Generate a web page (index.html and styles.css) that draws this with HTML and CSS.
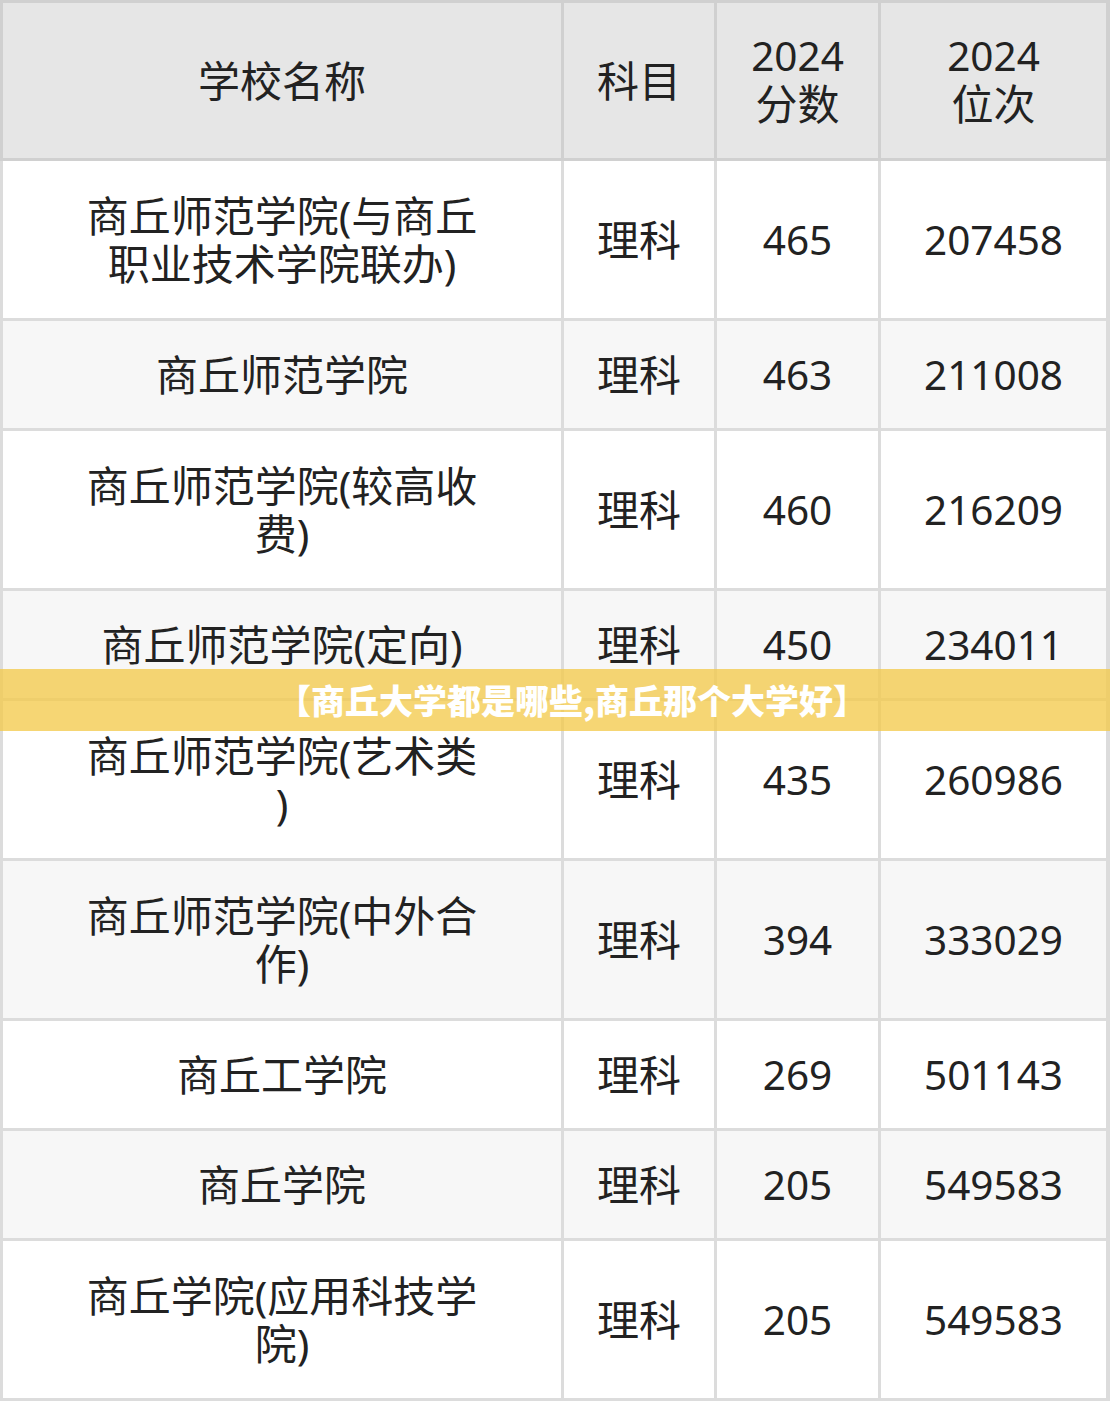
FILE: index.html
```html
<!DOCTYPE html>
<html lang="zh-CN">
<head>
<meta charset="utf-8">
<title>商丘大学都是哪些,商丘那个大学好</title>
<link rel="stylesheet" href="styles.css">
</head>
<body>
<div class="sheet">
  <div class="grid head">
    <div class="cell">学校名称</div>
    <div class="cell">科目</div>
    <div class="cell num"><div>2024<br><span class="cjk">分数</span></div></div>
    <div class="cell num"><div>2024<br><span class="cjk">位次</span></div></div>
  </div>
  <div class="grid body">
    <div class="cell tall">商丘师范学院(与商丘<br>职业技术学院联办)</div>
    <div class="cell tall">理科</div>
    <div class="cell tall num">465</div>
    <div class="cell tall num">207458</div>

    <div class="cell short alt">商丘师范学院</div>
    <div class="cell short alt">理科</div>
    <div class="cell short alt num">463</div>
    <div class="cell short alt num">211008</div>

    <div class="cell tall">商丘师范学院(较高收<br>费)</div>
    <div class="cell tall">理科</div>
    <div class="cell tall num">460</div>
    <div class="cell tall num">216209</div>

    <div class="cell short alt">商丘师范学院(定向)</div>
    <div class="cell short alt">理科</div>
    <div class="cell short alt num">450</div>
    <div class="cell short alt num">234011</div>

    <div class="cell tall">商丘师范学院(艺术类<br>)</div>
    <div class="cell tall">理科</div>
    <div class="cell tall num">435</div>
    <div class="cell tall num">260986</div>

    <div class="cell tall alt">商丘师范学院(中外合<br>作)</div>
    <div class="cell tall alt">理科</div>
    <div class="cell tall alt num">394</div>
    <div class="cell tall alt num">333029</div>

    <div class="cell short">商丘工学院</div>
    <div class="cell short">理科</div>
    <div class="cell short num">269</div>
    <div class="cell short num">501143</div>

    <div class="cell short alt">商丘学院</div>
    <div class="cell short alt">理科</div>
    <div class="cell short alt num">205</div>
    <div class="cell short alt num">549583</div>

    <div class="cell tall">商丘学院(应用科技学<br>院)</div>
    <div class="cell tall">理科</div>
    <div class="cell tall num">205</div>
    <div class="cell tall num">549583</div>
  </div>
  <div class="banner"><span class="banner-text">【商丘大学都是哪些,商丘那个大学好】</span></div>
</div>
</body>
</html>
```

FILE: styles.css
```css
html, body {
  margin: 0;
  padding: 0;
  background: #ffffff;
}

.sheet {
  position: relative;
  width: 1110px;
  font-family: "Noto Sans", "Noto Sans CJK SC", sans-serif;
  font-size: 42px;
  line-height: 48px;
  color: #222222;
}

.grid {
  display: grid;
  grid-template-columns: 558px 150px 161px 225px;
  column-gap: 3px;
  row-gap: 3px;
}

.head {
  background: #d0d0d0;
  padding: 3px 4px 3px 3px;
}

.head .cell {
  background: #e6e6e6;
  height: 155px;
}

.body {
  background: #dcdcdc;
  padding: 0 4px 3px 3px;
}

.cell {
  display: flex;
  align-items: center;
  justify-content: center;
  text-align: center;
  white-space: nowrap;
  background: #ffffff;
}

.cell.num {
  font-size: 40.5px;
}

.cjk {
  font-size: 42px;
}

.cell.alt {
  background: #f7f7f7;
}

.tall {
  height: 157px;
}

.short {
  height: 107px;
}

.banner {
  position: absolute;
  left: 0;
  right: 0;
  top: 669px;
  height: 62px;
  display: flex;
  align-items: center;
  justify-content: center;
  background: rgba(243, 201, 72, 0.76);
}

.banner-text {
  padding-left: 34px;
  color: #ffffff;
  font-family: "Noto Sans CJK SC", sans-serif;
  font-weight: 900;
  font-size: 34px;
  line-height: 40px;
}
```
